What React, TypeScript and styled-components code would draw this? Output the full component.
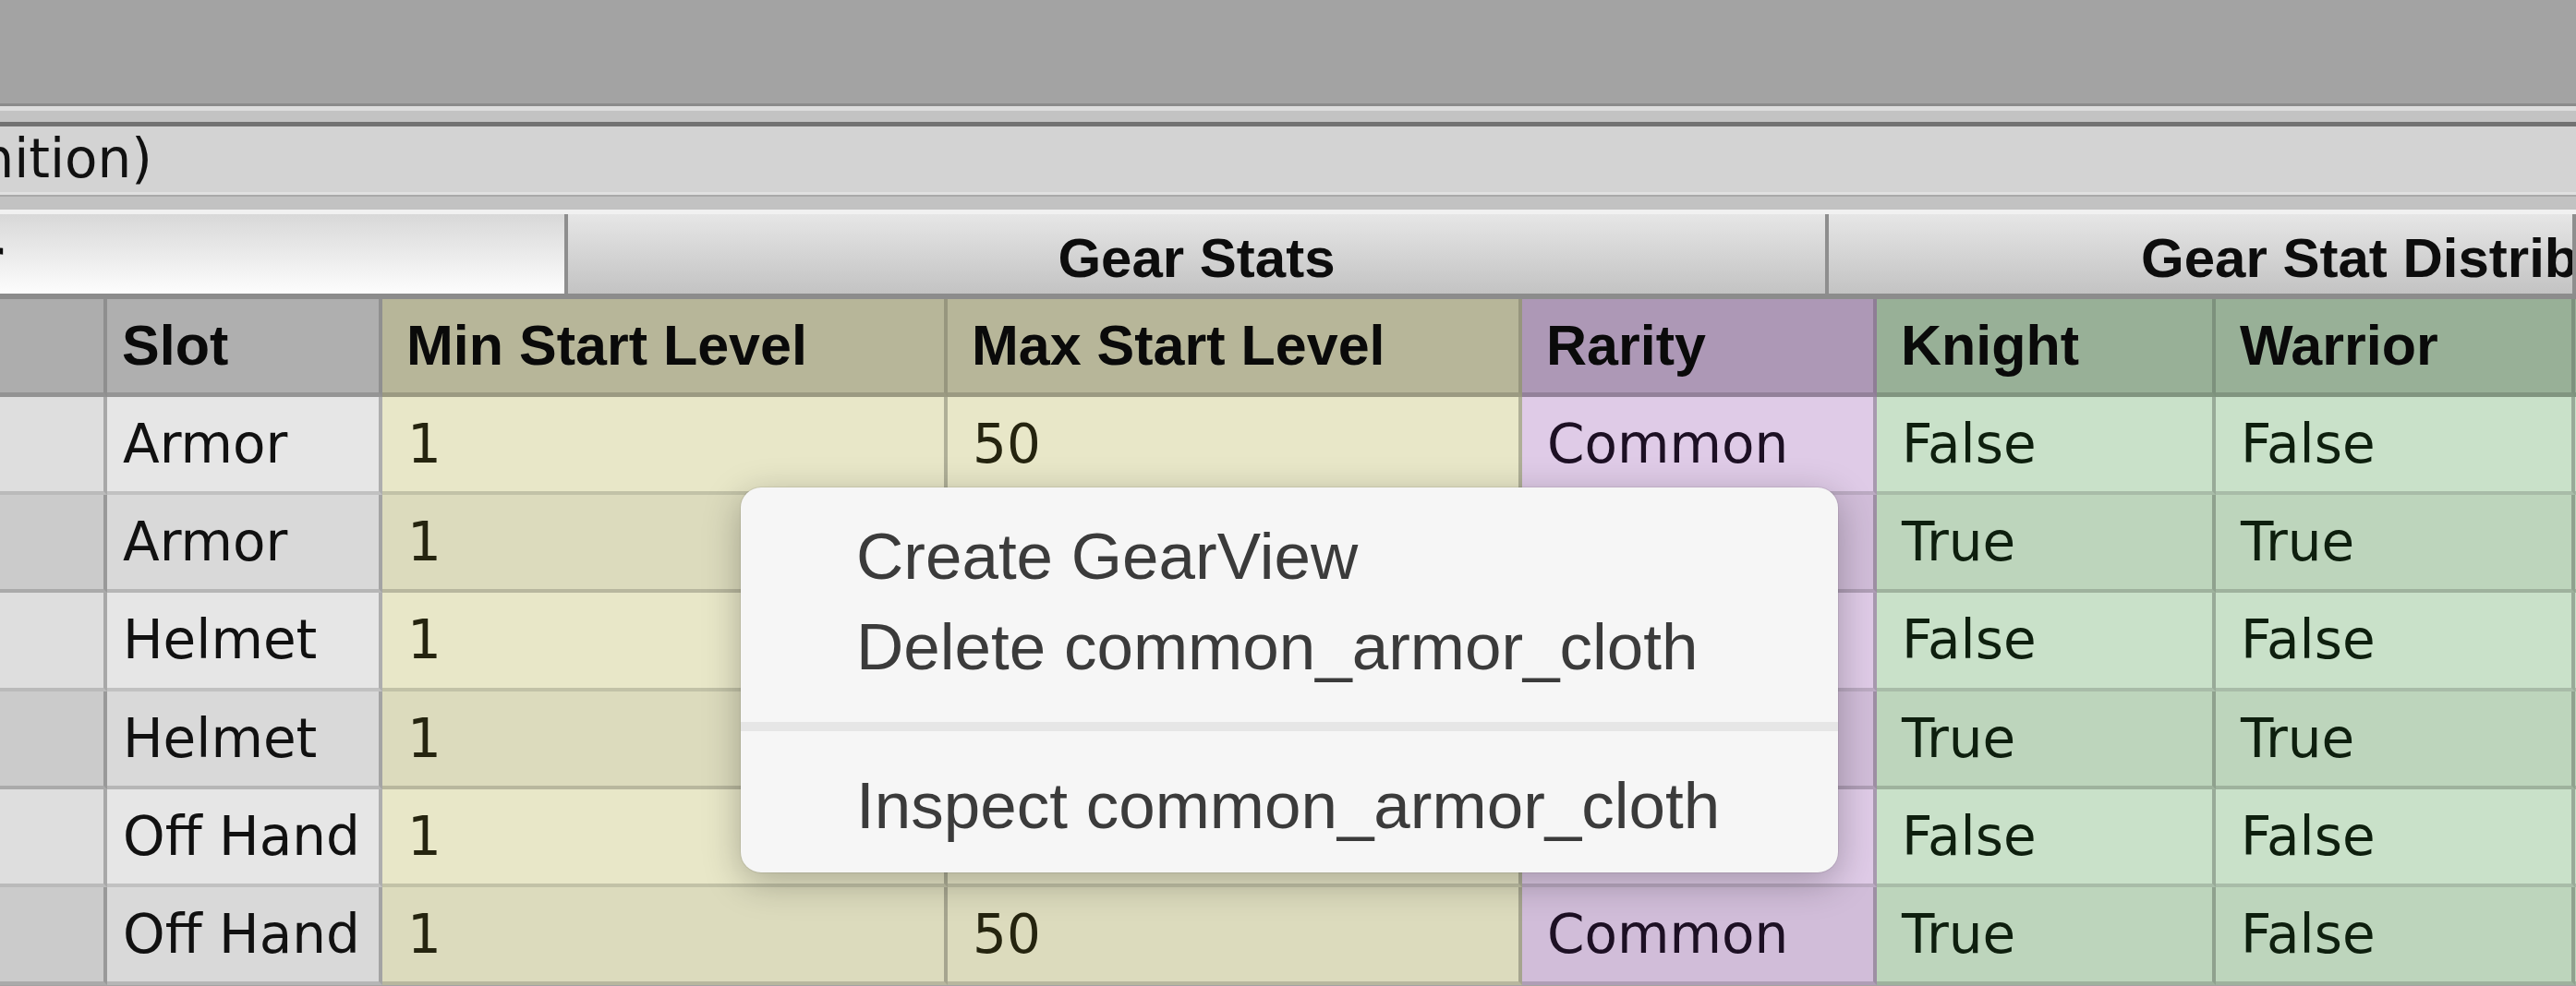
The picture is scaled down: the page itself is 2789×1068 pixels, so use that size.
import React from 'react';
import styled, { createGlobalStyle } from 'styled-components';

type Tone = 'index' | 'gray' | 'olive' | 'purple' | 'green';

const palette: Record<Tone, { head: string; odd: string; even: string; ink: string }> = {
  index: { head: '#adadad', odd: '#dedede', even: '#cbcbcb', ink: '#111111' },
  gray: { head: '#afafaf', odd: '#e6e6e6', even: '#d9d9d9', ink: '#111111' },
  olive: { head: '#b7b699', odd: '#e8e7c8', even: '#dcdbbd', ink: '#25240f' },
  purple: { head: '#ad98b6', odd: '#dfcbe7', even: '#d1bdd9', ink: '#1d1024' },
  green: { head: '#98b097', odd: '#c9e1c9', even: '#bdd5bc', ink: '#0e1f0e' },
};

type Column = { key: string; label: string; width: number; tone: Tone; inset: number };

const columns: Column[] = [
  { key: 'index', label: '', width: 116, tone: 'index', inset: 0 },
  { key: 'slot', label: 'Slot', width: 298, tone: 'gray', inset: 17 },
  { key: 'min', label: 'Min Start Level', width: 612, tone: 'olive', inset: 27 },
  { key: 'max', label: 'Max Start Level', width: 622, tone: 'olive', inset: 27 },
  { key: 'rarity', label: 'Rarity', width: 384, tone: 'purple', inset: 27 },
  { key: 'knight', label: 'Knight', width: 367, tone: 'green', inset: 27 },
  { key: 'warrior', label: 'Warrior', width: 389, tone: 'green', inset: 27 },
  { key: 'next', label: '', width: 300, tone: 'green', inset: 27 },
];

type Row = Record<string, string>;

/* Cells hidden behind the open context menu are left empty. */
const rows: Row[] = [
  { slot: 'Armor', min: '1', max: '50', rarity: 'Common', knight: 'False', warrior: 'False' },
  { slot: 'Armor', min: '1', knight: 'True', warrior: 'True' },
  { slot: 'Helmet', min: '1', knight: 'False', warrior: 'False' },
  { slot: 'Helmet', min: '1', knight: 'True', warrior: 'True' },
  { slot: 'Off Hand', min: '1', knight: 'False', warrior: 'False' },
  { slot: 'Off Hand', min: '1', max: '50', rarity: 'Common', knight: 'True', warrior: 'False' },
];

const GlobalStyle = createGlobalStyle`
  html, body {
    margin: 0;
    padding: 0;
    width: 2789px;
    height: 1068px;
    overflow: hidden;
    background: #a3a3a3;
  }
  #root {
    width: 2789px;
    height: 1068px;
  }
`;

const Screen = styled.div`
  position: relative;
  width: 2789px;
  height: 1068px;
  overflow: hidden;
  display: flex;
  flex-direction: column;
  background: #a3a3a3;
  font-family: 'DejaVu Sans', 'Liberation Sans', sans-serif;
`;

const Backdrop = styled.div`
  flex: none;
  height: 112px;
  background: #a3a3a3;
`;

const WindowFrame = styled.div`
  flex: none;
  height: 25px;
  box-sizing: border-box;
  border-top: 3px solid #8b8b8b;
  border-bottom: 5px solid #727272;
  background: linear-gradient(#dddddd 0 5px, #c3c3c3 5px 100%);
`;

const TitleBar = styled.div`
  flex: none;
  height: 71px;
  display: flex;
  align-items: center;
  background: #d3d3d3;
  font-size: 58px;
  line-height: 71px;
  color: #111111;
  overflow: hidden;
`;

const TrailingText = styled.div<{ $width: number }>`
  flex: none;
  width: ${(p) => p.$width}px;
  display: flex;
  justify-content: flex-end;
  white-space: nowrap;
`;

const Divider = styled.div`
  flex: none;
  height: 24px;
  background: linear-gradient(
    #e0e0e0 0 3px,
    #a9a9a9 3px 5px,
    #c2c2c2 5px 19px,
    #f1f1f1 19px 24px
  );
`;

const GroupRow = styled.div`
  flex: none;
  display: flex;
  height: 92px;
  box-sizing: border-box;
  border-bottom: 6px solid #8c8c8c;
`;

const GroupCell = styled.div<{ $width?: number; $pressed?: boolean; $centered?: boolean; $inset?: number }>`
  flex: ${(p) => (p.$width ? `0 0 ${p.$width}px` : '1 1 0')};
  min-width: 0;
  box-sizing: border-box;
  border-right: 4px solid #8e8e8e;
  display: flex;
  align-items: center;
  justify-content: ${(p) => (p.$centered ? 'center' : 'flex-start')};
  padding-top: 8px;
  padding-left: ${(p) => p.$inset ?? 0}px;
  overflow: hidden;
  white-space: nowrap;
  background: ${(p) =>
    p.$pressed ? 'linear-gradient(#d8d8d8, #fdfdfd)' : 'linear-gradient(#e6e6e6, #c3c3c3)'};
  font-family: 'Liberation Sans', Arial, sans-serif;
  font-weight: bold;
  font-size: 60px;
  line-height: 67px;
  color: #0d0d0d;
`;

const HeaderRow = styled.div`
  flex: none;
  display: flex;
  height: 106px;
`;

const HeaderCell = styled.div<{ $width: number; $tone: Tone; $inset: number }>`
  flex: 0 0 ${(p) => p.$width}px;
  box-sizing: border-box;
  height: 106px;
  padding-left: ${(p) => Math.max(p.$inset - 1, 0)}px;
  background: ${(p) => palette[p.$tone].head};
  border-right: 4px solid rgba(0, 0, 0, 0.17);
  border-bottom: 5px solid rgba(0, 0, 0, 0.15);
  font-family: 'Liberation Sans', Arial, sans-serif;
  font-weight: bold;
  font-size: 61px;
  line-height: 101px;
  color: #0a0a0a;
  white-space: nowrap;
  overflow: hidden;
`;

const DataRow = styled.div`
  flex: none;
  display: flex;
  height: 106.2px;
`;

const DataCell = styled.div<{ $width: number; $tone: Tone; $alt: boolean; $inset: number }>`
  flex: 0 0 ${(p) => p.$width}px;
  box-sizing: border-box;
  height: 106.2px;
  padding-left: ${(p) => p.$inset}px;
  background: ${(p) => (p.$alt ? palette[p.$tone].even : palette[p.$tone].odd)};
  border-right: 4px solid rgba(0, 0, 0, 0.24);
  border-bottom: 4px solid rgba(0, 0, 0, 0.16);
  font-size: 58px;
  line-height: 102.2px;
  color: ${(p) => palette[p.$tone].ink};
  white-space: nowrap;
  overflow: hidden;
`;

const ContextMenu = styled.div`
  position: absolute;
  left: 802px;
  top: 528px;
  width: 1188px;
  box-sizing: border-box;
  padding: 26px 0 23px;
  background: #f6f6f6;
  border-radius: 22px;
  box-shadow: 0 10px 40px rgba(0, 0, 0, 0.28), 0 0 0 1px rgba(0, 0, 0, 0.07);
  font-family: 'Liberation Sans', Arial, sans-serif;
  font-size: 71px;
  color: #3b3b3b;
`;

const MenuItem = styled.div`
  height: 98px;
  line-height: 98px;
  padding-left: 125px;
  white-space: nowrap;
`;

const MenuSeparator = styled.div`
  height: 10px;
  margin: 32px 0;
  background: #e6e6e6;
`;

export default function App() {
  return (
    <>
      <GlobalStyle />
      <Screen>
        <Backdrop />
        <WindowFrame />
        <TitleBar>
          <TrailingText $width={165}>GearDefinition (Gear Definition)</TrailingText>
        </TitleBar>
        <Divider />
        <GroupRow>
          <GroupCell $width={615} $pressed>
            <TrailingText $width={4}>Gear Identifier</TrailingText>
          </GroupCell>
          <GroupCell $width={1365} $centered>
            Gear Stats
          </GroupCell>
          <GroupCell $inset={338}>Gear Stat Distribution</GroupCell>
        </GroupRow>
        <HeaderRow>
          {columns.map((c) => (
            <HeaderCell key={c.key} $width={c.width} $tone={c.tone} $inset={c.inset}>
              {c.label}
            </HeaderCell>
          ))}
        </HeaderRow>
        {rows.map((r, i) => (
          <DataRow key={i}>
            {columns.map((c) => (
              <DataCell key={c.key} $width={c.width} $tone={c.tone} $alt={i % 2 === 1} $inset={c.inset}>
                {r[c.key] ?? ''}
              </DataCell>
            ))}
          </DataRow>
        ))}
        <ContextMenu>
          <MenuItem>Create GearView</MenuItem>
          <MenuItem>Delete common_armor_cloth</MenuItem>
          <MenuSeparator />
          <MenuItem>Inspect common_armor_cloth</MenuItem>
        </ContextMenu>
      </Screen>
    </>
  );
}
